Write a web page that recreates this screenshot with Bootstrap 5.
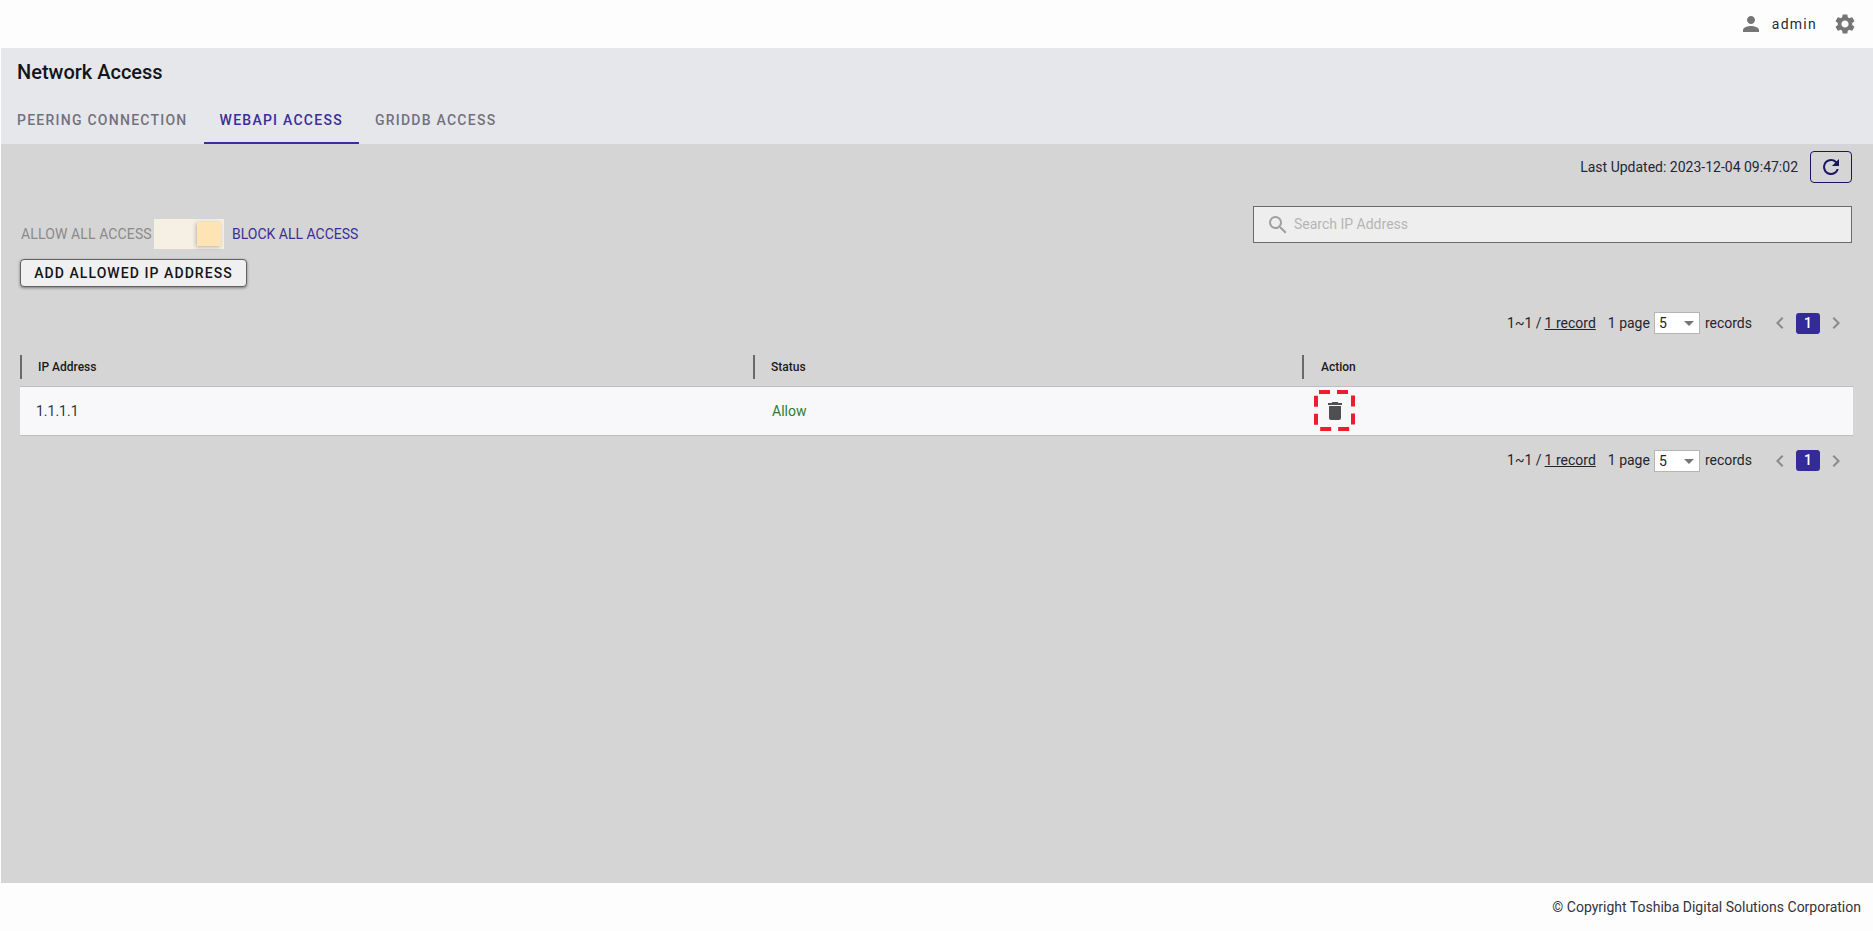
<!DOCTYPE html>
<html>
<head>
  <meta charset="UTF-8">
  <title>Network Access</title>
  <link href="https://cdn.jsdelivr.net/npm/bootstrap@5.3.0/dist/css/bootstrap.min.css" rel="stylesheet">
  <style>
    html, body { height: 100%; }
    body {
      font-family: Roboto, "Liberation Sans", sans-serif;
      font-size: 14px;
      color: #212121;
      background: #fdfdfe;
    }
    .app-shell { height: 931px; }
    .top-bar { height: 48px; padding-right: 16px; background: #fdfdfe; }
    .user-name { font-size: 14px; letter-spacing: 1.25px; margin: 0 16px 0 9px; color: #2b2b33; }
    .page-head { height: 96px; margin-left: 1px; background: #e6e7eb; }
    .page-title { font-size: 20px; font-weight: 500; line-height: 24px; color: #14141a; padding: 12px 16px 0; margin: 0; }
    .head-tabs { margin-top: 12px; height: 48px; }
    .head-tab {
      display: block; height: 48px; padding: 0 16px; line-height: 48px;
      font-size: 14px; font-weight: 500; letter-spacing: 1.25px; color: #72727c;
      text-decoration: none; border-bottom: 2px solid transparent;
    }
    .head-tab.is-active { color: #3c2d9b; border-bottom-color: #3c2d9b; }
    .main-area { flex: 1; margin-left: 1px; background: #d5d5d5; padding: 7px 21px 0 19px; }
    .updated-row { height: 32px; }
    .updated-text { margin-right: 12px; font-size: 14px; color: #25253a; }
    .refresh-btn {
      width: 42px; height: 32px; padding: 0; background: transparent;
      border: 1px solid #1c1464; border-radius: 4px;
    }
    .access-row { height: 119px; padding-top: 23px; }
    .switch-line { height: 30px; margin-top: 13px; }
    .allow-label { color: #8a8a8a; font-size: 14px; width: 134px; padding-left: 1px; letter-spacing: .12px; white-space: nowrap; }
    .block-label { color: #3c2d9b; font-size: 14px; margin-left: 8px; white-space: nowrap; }
    .fake-switch { position: relative; width: 70px; height: 30px; background: #f5efe4; }
    .fake-knob {
      position: absolute; top: 3px; right: 3px; width: 24px; height: 24px;
      background: #fee3b4; box-shadow: -1px 1px 4px rgba(0,0,0,.25);
    }
    .add-btn {
      display: block; width: 227px; height: 28px; margin-top: 10px; padding: 0;
      background: #f0f0f0; border: 1px solid #616161; border-radius: 4px;
      box-shadow: 0 1px 3px rgba(0,0,0,.45);
      font-size: 14px; font-weight: 500; letter-spacing: 1.07px; color: #14141a;
    }
    .search-box {
      width: 599px; height: 37px;
      background: #eeeeee; border: 1px solid #6a6a6a; padding-left: 12px;
    }
    .search-box input {
      border: 0; background: transparent; outline: 0; flex: 1; margin-left: 2px;
      font-family: inherit; font-size: 14px; color: #212121;
    }
    .search-box input::placeholder { color: #b5b5b5; opacity: 1; }
    .pager-row { height: 42px; padding-right: 4px; font-size: 14px; color: #25252c; }
    .pager-low { height: 50px; }
    .pager-link { text-decoration: underline; color: inherit; margin-left: 3px; }
    .page-size {
      width: 46px; height: 22px; margin: 0 5px 0 4px; padding-left: 4px; line-height: 20px;
      background: #fff; border: 1px solid #b5b5b5; position: relative;
    }
    .page-size::after {
      content: ""; position: absolute; right: 5px; top: 8px;
      border: 5px solid transparent; border-top: 5px solid #757575; border-bottom: 0;
    }
    .page-num {
      width: 24px; height: 21px; line-height: 21px; margin: 0 4px; text-align: center;
      background: #352a99; color: #fff; border-radius: 3px; font-weight: 500;
    }
    .net-table { width: 1833px; table-layout: fixed; margin: 0; border-collapse: collapse; }
    .net-table th {
      height: 35px; padding: 4px 0 0; vertical-align: top; font-size: 12px; font-weight: 500; color: #1a1a20;
    }
    .head-cell { display: block; height: 24px; line-height: 24px; padding-left: 16px; border-left: 2px solid #6a6a6a; }
    .net-table td {
      height: 49px; padding: 0; background: #f8f8fa; font-size: 14px; color: #33334a;
      border-top: 1px solid #bdbdbd; border-bottom: 1px solid #bdbdbd; vertical-align: middle;
    }
    .net-table tr > :nth-child(1) { width: 733px; }
    .net-table tr > :nth-child(2) { width: 549px; }
    .net-table tr > :nth-child(3) .head-cell { padding-left: 17px; }
    .ip-cell { padding: 1px 0 0 16px !important; }
    .status-cell { padding: 1px 0 0 19px !important; color: #2e7d32 !important; }
    .del-box {
      display: flex; align-items: center; justify-content: center;
      width: 41px; height: 41px; margin-left: 12px;
      background: transparent; padding: 0; position: relative;
    }
    .del-box svg.dash-frame { position: absolute; left: 0; top: 0; }
    .head-gap { height: 7px; }
    .bottom-bar { height: 48px; padding-right: 12px; background: #fdfdfe; font-size: 14px; color: #33333d; }
  </style>
</head>
<body>
  <div class="app-shell d-flex flex-column">
    <div class="top-bar d-flex align-items-center justify-content-end">
      <svg width="24" height="24" viewBox="0 0 24 24" fill="#757575"><path d="M12 12c2.21 0 4-1.79 4-4s-1.79-4-4-4-4 1.79-4 4 1.79 4 4 4zm0 2c-2.67 0-8 1.34-8 4v2h16v-2c0-2.66-5.33-4-8-4z"/></svg>
      <span class="user-name">admin</span>
      <svg width="24" height="24" viewBox="0 0 24 24" fill="#757575"><path d="M19.14 12.94c.04-.3.06-.61.06-.94 0-.32-.02-.64-.07-.94l2.03-1.58c.18-.14.23-.41.12-.61l-1.92-3.32c-.12-.22-.37-.29-.59-.22l-2.39.96c-.5-.38-1.03-.7-1.62-.94l-.36-2.54c-.04-.24-.24-.41-.48-.41h-3.84c-.24 0-.43.17-.47.41l-.36 2.54c-.59.24-1.13.57-1.62.94l-2.39-.96c-.22-.08-.47 0-.59.22L2.74 8.87c-.12.21-.08.47.12.61l2.03 1.58c-.05.3-.09.63-.09.94s.02.64.07.94l-2.03 1.58c-.18.14-.23.41-.12.61l1.92 3.32c.12.22.37.29.59.22l2.39-.96c.5.38 1.03.7 1.62.94l.36 2.54c.05.24.24.41.48.41h3.84c.24 0 .44-.17.47-.41l.36-2.54c.59-.24 1.13-.56 1.62-.94l2.39.96c.22.08.47 0 .59-.22l1.92-3.32c.12-.22.07-.47-.12-.61l-2.01-1.58zM12 15.6c-1.98 0-3.6-1.62-3.6-3.6s1.62-3.6 3.6-3.6 3.6 1.62 3.6 3.6-1.62 3.6-3.6 3.6z"/></svg>
    </div>

    <div class="page-head">
      <h1 class="page-title">Network Access</h1>
      <div class="head-tabs d-flex">
        <a class="head-tab" href="#">PEERING CONNECTION</a>
        <a class="head-tab is-active" href="#">WEBAPI ACCESS</a>
        <a class="head-tab" href="#">GRIDDB ACCESS</a>
      </div>
    </div>

    <div class="main-area d-flex flex-column">
      <div class="updated-row d-flex align-items-center justify-content-end">
        <span class="updated-text">Last Updated: 2023-12-04 09:47:02</span>
        <button class="refresh-btn d-flex align-items-center justify-content-center" type="button">
          <svg width="24" height="24" viewBox="0 0 24 24" fill="#1c1464"><path d="M17.65 6.35A7.96 7.96 0 0 0 12 4a8 8 0 1 0 7.73 10h-2.08A6 6 0 1 1 12 6c1.66 0 3.14.69 4.22 1.78L13 11h7V4l-2.35 2.35z"/></svg>
        </button>
      </div>

      <div class="access-row d-flex justify-content-between">
        <div>
          <div class="switch-line d-flex align-items-center">
            <span class="allow-label">ALLOW ALL ACCESS</span>
            <div class="fake-switch"><div class="fake-knob"></div></div>
            <span class="block-label">BLOCK ALL ACCESS</span>
          </div>
          <button class="add-btn" type="button">ADD ALLOWED IP ADDRESS</button>
        </div>
        <div class="search-box d-flex align-items-center">
          <svg width="24" height="24" viewBox="0 0 24 24" fill="#9e9e9e"><path d="M15.5 14h-.79l-.28-.27A6.47 6.47 0 0 0 16 9.5 6.5 6.5 0 1 0 9.5 16c1.61 0 3.09-.59 4.23-1.57l.27.28v.79l5 4.99L20.49 19l-4.99-5zm-6 0C7.01 14 5 11.99 5 9.5S7.01 5 9.5 5 14 7.01 14 9.5 11.99 14 9.5 14z"/></svg>
          <input type="text" placeholder="Search IP Address">
        </div>
      </div>

      <div class="pager-row d-flex align-items-center justify-content-end">
        <span>1~1 /<a class="pager-link" href="#">1 record</a></span>
        <span class="ms-2 ps-1">1 page</span>
        <div class="page-size">5</div>
        <span>records</span>
        <svg class="ms-3" width="24" height="24" viewBox="0 0 24 24" fill="#8a8a8a"><path d="M15.41 7.41 14 6l-6 6 6 6 1.41-1.41L10.83 12z"/></svg>
        <div class="page-num">1</div>
        <svg width="24" height="24" viewBox="0 0 24 24" fill="#8a8a8a"><path d="M10 6 8.59 7.41 13.17 12l-4.58 4.59L10 18l6-6z"/></svg>
      </div>
      <div class="head-gap"></div>

      <table class="net-table">
        <thead>
          <tr>
            <th><span class="head-cell">IP Address</span></th>
            <th><span class="head-cell">Status</span></th>
            <th><span class="head-cell">Action</span></th>
          </tr>
        </thead>
        <tbody>
          <tr>
            <td class="ip-cell">1.1.1.1</td>
            <td class="status-cell">Allow</td>
            <td>
              <div class="del-box">
                <svg class="dash-frame" width="41" height="41" viewBox="0 0 41 41" fill="none"><rect x="2" y="2" width="37" height="37" rx="3" stroke="#ed1c2e" stroke-width="4" stroke-dasharray="11 7"/></svg>
                <svg width="24" height="24" viewBox="0 0 24 24" fill="#4f4f4f"><path d="M6 19c0 1.1.9 2 2 2h8c1.1 0 2-.9 2-2V7H6v12zM19 4h-3.5l-1-1h-5l-1 1H5v2h14V4z"/></svg>
              </div>
            </td>
          </tr>
        </tbody>
      </table>

      <div class="pager-row pager-low d-flex align-items-center justify-content-end">
        <span>1~1 /<a class="pager-link" href="#">1 record</a></span>
        <span class="ms-2 ps-1">1 page</span>
        <div class="page-size">5</div>
        <span>records</span>
        <svg class="ms-3" width="24" height="24" viewBox="0 0 24 24" fill="#8a8a8a"><path d="M15.41 7.41 14 6l-6 6 6 6 1.41-1.41L10.83 12z"/></svg>
        <div class="page-num">1</div>
        <svg width="24" height="24" viewBox="0 0 24 24" fill="#8a8a8a"><path d="M10 6 8.59 7.41 13.17 12l-4.58 4.59L10 18l6-6z"/></svg>
      </div>
    </div>

    <div class="bottom-bar d-flex align-items-center justify-content-end">© Copyright Toshiba Digital Solutions Corporation</div>
  </div>
  <script src="https://cdn.jsdelivr.net/npm/bootstrap@5.3.0/dist/js/bootstrap.bundle.min.js"></script>
</body>
</html>
